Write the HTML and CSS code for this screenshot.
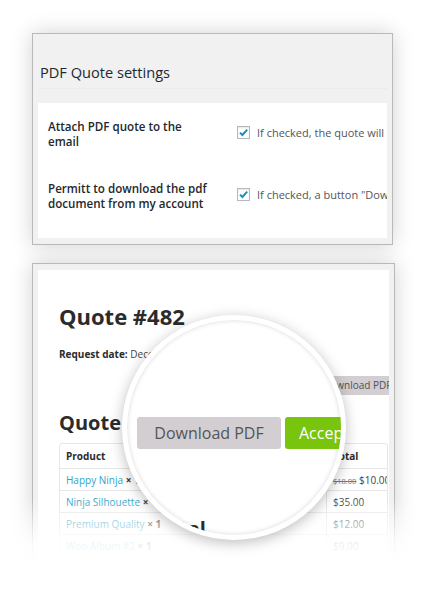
FILE: index.html
```html
<!DOCTYPE html>
<html>
<head>
<meta charset="utf-8">
<title>PDF Quote</title>
<link rel="stylesheet" href="styles.css">
</head>
<body>
<div class="page">
  <section class="card settings">
    <h2 class="settings-title">PDF Quote settings</h2>
    <div class="divider"></div>
    <div class="panel">
      <div class="row">
        <div class="label">Attach PDF quote to the email</div>
        <div class="field">
          <span class="cb"><svg width="11" height="11" viewBox="0 0 11 11"><path d="M2 5.6 L4.4 8 L9.2 2.6" fill="none" stroke="#1e8cbe" stroke-width="2"/></svg></span>
          <span class="desc">If checked, the quote will be attached to the email</span>
        </div>
      </div>
      <div class="row">
        <div class="label">Permitt to download the pdf document from my account</div>
        <div class="field">
          <span class="cb"><svg width="11" height="11" viewBox="0 0 11 11"><path d="M2 5.6 L4.4 8 L9.2 2.6" fill="none" stroke="#1e8cbe" stroke-width="2"/></svg></span>
          <span class="desc">If checked, a button "Download PDF" will be shown</span>
        </div>
      </div>
    </div>
  </section>

  <section class="card quote">
    <div class="qpanel">
      <h1 class="q-title">Quote #482</h1>
      <p class="req"><b>Request date:</b> December 12, 2017</p>
      <div class="actions">
        <span class="btn-sm">Download PDF</span>
        <span class="btn-sm green">Accept</span>
      </div>
      <h2 class="q-sub">Quote Details</h2>
      <table class="items">
        <thead>
          <tr><th class="c1">Product</th><th class="c2">Total</th></tr>
        </thead>
        <tbody>
          <tr><td><span class="link">Happy Ninja</span> <span class="qty">× 1</span></td><td><del>$18.00</del> $10.00</td></tr>
          <tr><td><span class="link">Ninja Silhouette</span> <span class="qty">× 1</span></td><td>$35.00</td></tr>
          <tr><td><span class="link">Premium Quality</span> <span class="qty">× 1</span></td><td>$12.00</td></tr>
          <tr><td><span class="link">Woo Album #2</span> <span class="qty">× 1</span></td><td>$9.00</td></tr>
          <tr><td><span class="link">Woo Logo</span> <span class="qty">× 1</span></td><td>$18.00</td></tr>
        </tbody>
      </table>
    </div>
  </section>
</div>

<div class="fade"></div>

<div class="lens">
  <div class="lens-buttons">
    <span class="btn-lg">Download PDF</span>
    <span class="btn-lg green">Accept</span>
  </div>
  <div class="lens-text">Total</div>
</div>
</body>
</html>
```

FILE: styles.css
```css
* { box-sizing: border-box; }
html, body { margin: 0; padding: 0; background: #fff; }
body {
  width: 422px;
  height: 605px;
  overflow: hidden;
  position: relative;
  font-family: "Open Sans", "Noto Sans", sans-serif;
  color: #23282d;
}
.page { padding: 33px 0 0 32px; }

.card {
  background: #f1f1f1;
  border: 1px solid #b9b9b9;
  box-shadow: 0 0 20px rgba(0, 0, 0, 0.18);
}

/* settings card */
.settings { width: 361px; padding: 28px 5px 6px; }
.settings-title {
  margin: 0 0 0 2px;
  font-size: 14.6px;
  font-weight: 400;
  line-height: 20px;
  color: #23282d;
}
.divider { height: 1px; background: #ebebeb; margin: 6px 0 14px; }
.panel { background: #fff; padding: 0 0 11px 10px; overflow: hidden; }
.row { display: flex; padding: 16px 0; }
.label {
  flex: 0 0 189px;
  padding-right: 27px;
  font-size: 11.6px;
  font-weight: 600;
  line-height: 15px;
  color: #23282d;
}
.field {
  display: flex;
  align-items: center;
  gap: 7px;
  margin-top: 6px;
  height: 15px;
  white-space: nowrap;
}
.cb {
  flex: 0 0 13px;
  width: 13px;
  height: 13px;
  border: 1px solid #b4b9be;
  background: #fff;
  box-shadow: inset 0 1px 2px rgba(0, 0, 0, 0.1);
  display: flex;
  align-items: center;
  justify-content: center;
}
.desc { font-size: 11px; line-height: 15px; color: #555; }

/* quote card */
.quote { width: 363px; margin-top: 18px; padding: 6px 5px 0; height: 360px; }
.qpanel {
  background: #fff;
  height: 100%;
  overflow: hidden;
  padding: 33px 0 0 21px;
  color: #2b2b2b;
}
.q-title { margin: 0; font-size: 22px; font-weight: 700; line-height: 26px; color: #2b2b2b; }
.req { margin: 18px 0 0; font-size: 10px; line-height: 14px; color: #444; white-space: nowrap; }
.req b { color: #2b2b2b; font-weight: 700; }
.actions { display: flex; gap: 4px; margin: 15px 0 0 256px; }
.btn-sm {
  flex: 0 0 auto;
  height: 19px;
  padding: 0 8px;
  font-size: 10px;
  line-height: 19px;
  background: #d3ced2;
  color: #515151;
  border-radius: 2px;
  white-space: nowrap;
}
.btn-sm.green { background: #79c40c; color: #fff; }
.q-sub { margin: 16px 0 0; font-size: 20px; line-height: 24px; font-weight: 700; color: #2b2b2b; }

.items {
  margin-top: 8px;
  width: 329px;
  table-layout: fixed;
  border: 1px solid #e6e6e6;
  border-collapse: separate;
  border-spacing: 0;
  border-radius: 3px;
  font-size: 10px;
  color: #444;
}
.items th, .items td {
  text-align: left;
  padding: 0 6px;
  height: 22px;
  border-top: 1px solid #e6e6e6;
  white-space: nowrap;
  overflow: hidden;
}
.items th { height: 24px; border-top: 0; font-weight: 700; color: #2b2b2b; }
.items th + th, .items td + td { border-left: 1px solid #e6e6e6; }
.items .c1 { width: 266px; }
.link { color: #2fa3c5; }
.qty { font-weight: 700; color: #333; }
del { font-size: 7.5px; color: #777; }

/* bottom fade */
.fade {
  position: absolute;
  left: 0;
  top: 480px;
  width: 422px;
  height: 125px;
  background: linear-gradient(
    rgba(255, 255, 255, 0) 0px,
    rgba(255, 255, 255, 0) 18px,
    rgba(255, 255, 255, 0.55) 43px,
    rgba(255, 255, 255, 0.9) 64px,
    #fff 84px
  );
}

/* magnifier */
.lens {
  position: absolute;
  left: 122px;
  top: 315px;
  width: 224px;
  height: 225px;
  border-radius: 50%;
  border: 5px solid #fff;
  background: #fff;
  overflow: hidden;
  box-shadow: 0 3px 14px rgba(0, 0, 0, 0.26), inset 0 0 5px rgba(0, 0, 0, 0.16);
  padding: 97px 0 0 10px;
}
.lens-buttons { display: flex; gap: 4px; }
.btn-lg {
  flex: 0 0 auto;
  height: 32px;
  line-height: 32px;
  font-size: 16px;
  border-radius: 3px;
  white-space: nowrap;
  background: #d3ced2;
  color: #555;
  width: 144px;
  text-align: center;
}
.btn-lg.green { background: #79c40c; color: #fff; width: 110px; text-align: left; padding-left: 14px; }
.lens-text {
  margin: 68px 0 0 18px;
  font-size: 20px;
  line-height: 24px;
  font-weight: 700;
  color: #2b2b2b;
}
```
